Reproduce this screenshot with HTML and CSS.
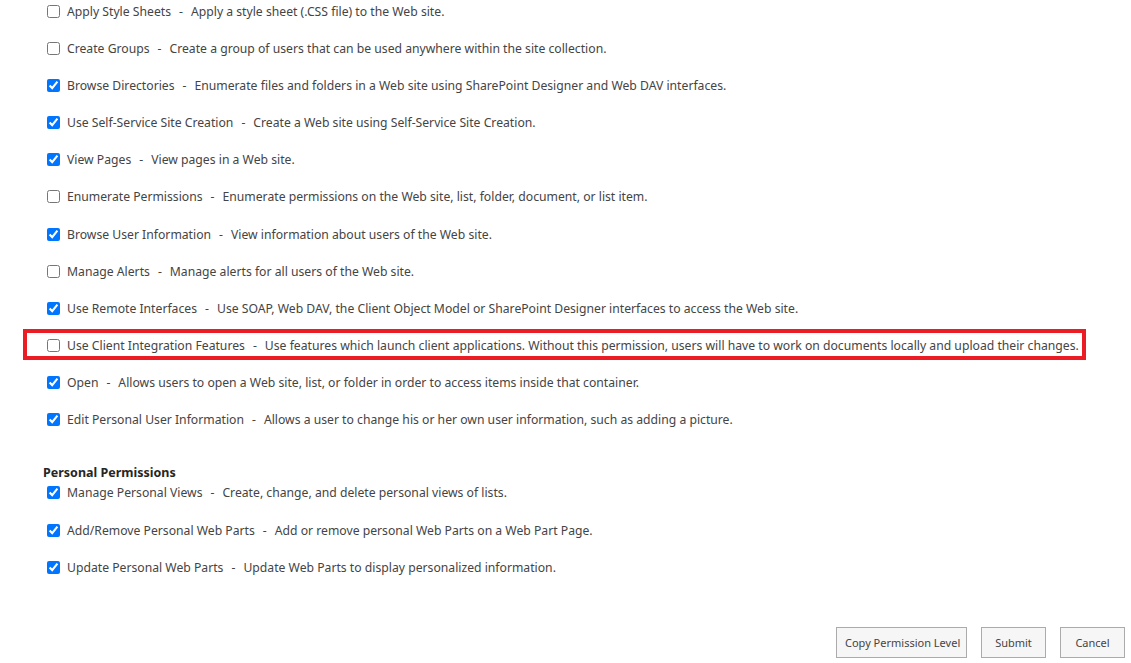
FILE: index.html
```html
<!DOCTYPE html>
<html lang="en">

<head>
    <meta charset="UTF-8">
    <meta name="viewport" content="width=device-width, initial-scale=1.0">
    <title>Edit Permission Level</title>
    <link rel="stylesheet" href="styles.css">
</head>

<body>
    <div class="page">
        <ul class="perm-list">
            <li class="perm"><input type="checkbox"><span class="name">Apply Style Sheets</span><span class="sep">-</span><span class="desc">Apply a style sheet (.CSS file) to the Web site.</span></li>
            <li class="perm"><input type="checkbox"><span class="name">Create Groups</span><span class="sep">-</span><span class="desc">Create a group of users that can be used anywhere within the site collection.</span></li>
            <li class="perm"><input type="checkbox" checked><span class="name">Browse Directories</span><span class="sep">-</span><span class="desc">Enumerate files and folders in a Web site using SharePoint Designer and Web DAV interfaces.</span></li>
            <li class="perm"><input type="checkbox" checked><span class="name">Use Self-Service Site Creation</span><span class="sep">-</span><span class="desc">Create a Web site using Self-Service Site Creation.</span></li>
            <li class="perm"><input type="checkbox" checked><span class="name">View Pages</span><span class="sep">-</span><span class="desc">View pages in a Web site.</span></li>
            <li class="perm"><input type="checkbox"><span class="name">Enumerate Permissions</span><span class="sep">-</span><span class="desc">Enumerate permissions on the Web site, list, folder, document, or list item.</span></li>
            <li class="perm"><input type="checkbox" checked><span class="name">Browse User Information</span><span class="sep">-</span><span class="desc">View information about users of the Web site.</span></li>
            <li class="perm"><input type="checkbox"><span class="name">Manage Alerts</span><span class="sep">-</span><span class="desc">Manage alerts for all users of the Web site.</span></li>
            <li class="perm"><input type="checkbox" checked><span class="name">Use Remote Interfaces</span><span class="sep">-</span><span class="desc">Use SOAP, Web DAV, the Client Object Model or SharePoint Designer interfaces to access the Web site.</span></li>
            <li class="perm highlight"><input type="checkbox"><span class="name">Use Client Integration Features</span><span class="sep">-</span><span class="desc">Use features which launch client applications. Without this permission, users will have to work on documents locally and upload their changes.</span></li>
            <li class="perm"><input type="checkbox" checked><span class="name">Open</span><span class="sep">-</span><span class="desc">Allows users to open a Web site, list, or folder in order to access items inside that container.</span></li>
            <li class="perm"><input type="checkbox" checked><span class="name">Edit Personal User Information</span><span class="sep">-</span><span class="desc">Allows a user to change his or her own user information, such as adding a picture.</span></li>
        </ul>

        <h3 class="group-title">Personal Permissions</h3>
        <ul class="perm-list">
            <li class="perm"><input type="checkbox" checked><span class="name">Manage Personal Views</span><span class="sep">-</span><span class="desc">Create, change, and delete personal views of lists.</span></li>
            <li class="perm"><input type="checkbox" checked><span class="name">Add/Remove Personal Web Parts</span><span class="sep">-</span><span class="desc">Add or remove personal Web Parts on a Web Part Page.</span></li>
            <li class="perm"><input type="checkbox" checked><span class="name">Update Personal Web Parts</span><span class="sep">-</span><span class="desc">Update Web Parts to display personalized information.</span></li>
        </ul>

        <div class="actions">
            <button type="button" class="btn btn-wide">Copy Permission Level</button>
            <button type="button" class="btn">Submit</button>
            <button type="button" class="btn">Cancel</button>
        </div>
    </div>
</body>

</html>
```

FILE: styles.css
```css
body {
    font-family: "Noto Sans", "Open Sans", Arial, sans-serif;
    font-size: 12.2px;
    color: #444;
    margin: 0;
    padding: 0;
    background-color: #fff;
}

.page {
    padding: 1px 6px 0 43px;
}

.perm-list {
    list-style: none;
    margin: 0;
    padding: 0;
}

.perm {
    display: flex;
    align-items: center;
    height: 20px;
    margin-bottom: 17.2px;
    white-space: nowrap;
}

.perm:last-child {
    margin-bottom: 0;
}

.perm input {
    width: 13px;
    height: 13px;
    margin: 0 7px 0 4px;
    accent-color: #0075ff;
}

.sep {
    margin: 0 8px;
}

.highlight {
    margin-left: -20px;
    padding: 2px 0 0 16px;
    width: 1039px;
    height: 21px;
    border: 4px solid #ec1c24;
    margin-top: -7px;
    margin-bottom: 13px;
}

.group-title {
    font-size: 12.5px;
    font-weight: bold;
    color: #262626;
    margin: 33px 0 0 0;
    line-height: 20px;
}

.actions {
    display: flex;
    justify-content: flex-end;
    gap: 14px;
    margin-top: 50px;
}

.btn {
    font-family: inherit;
    font-size: 11px;
    color: #444;
    background: #f6f6f6;
    border: 1px solid #ababab;
    height: 31px;
    min-width: 65px;
    padding: 0 8px;
    white-space: nowrap;
    cursor: pointer;
}

.btn-wide {
    width: 131px;
}

.btn:hover {
    background: #e6f2fa;
}
```
